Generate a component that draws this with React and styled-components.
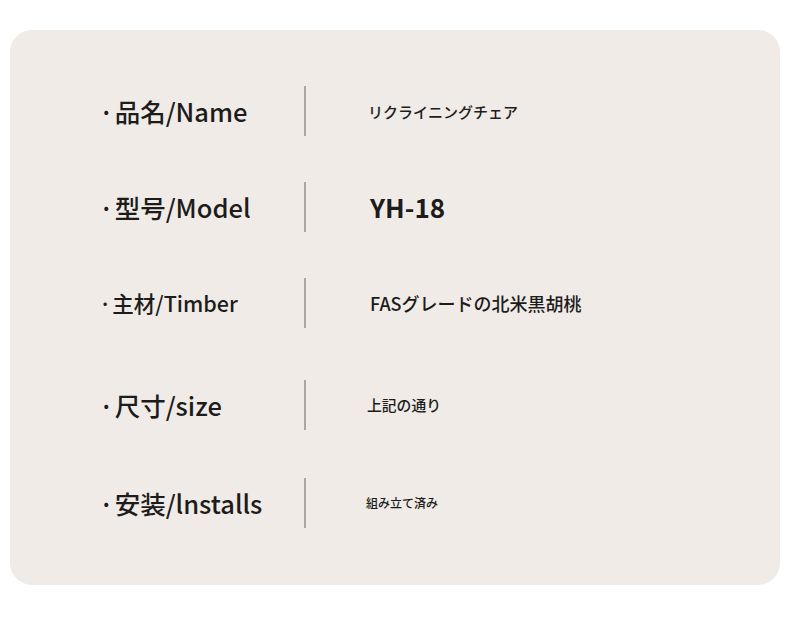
import React from "react";
import styled, { createGlobalStyle } from "styled-components";

const Global = createGlobalStyle`
  html, body { margin: 0; padding: 0; background: #ffffff; }
  body { font-family: "Noto Sans CJK JP", "Noto Sans", sans-serif; color: #1c1c1c; }
`;

const Page = styled.div`
  padding: 30px 10px 37px 10px;
`;

const Card = styled.div`
  width: 770px;
  height: 555px;
  box-sizing: border-box;
  background: #f0ebe6;
  border-radius: 22px;
  padding: 56px 0 0 89px;
  display: flex;
  flex-direction: column;
`;

const Row = styled.div`
  display: grid;
  grid-template-columns: 205px 2px 1fr;
  align-items: center;
  height: 50px;
  margin-top: ${(p) => p.$gap}px;
`;

const Label = styled.div`
  font-size: ${(p) => p.$size}px;
  font-weight: 500;
  white-space: nowrap;
  line-height: 1;
  color: #1c1c1c;
`;

const Dot = styled.span`
  margin-right: 1px;
`;

const Divider = styled.div`
  width: 2px;
  height: 50px;
  background: #a9a6a3;
`;

const Value = styled.div`
  padding-left: ${(p) => p.$indent}px;
  font-size: ${(p) => p.$size}px;
  font-weight: ${(p) => p.$weight};
  white-space: nowrap;
  line-height: 1;
  color: #1c1c1c;
`;

const rows = [
  { gap: 0, label: "品名/Name", lsize: 25.5, value: "リクライニングチェア", vsize: 15, weight: 500, indent: 62 },
  { gap: 46, label: "型号/Model", lsize: 25.5, value: "YH-18", vsize: 26, weight: 600, indent: 64 },
  { gap: 46, label: "主材/Timber", lsize: 21.5, value: "FASグレードの北米黒胡桃", vsize: 18, weight: 500, indent: 64 },
  { gap: 52, label: "尺寸/size", lsize: 25.5, value: "上記の通り", vsize: 14.8, weight: 500, indent: 61 },
  { gap: 48, label: "安装/lnstalls", lsize: 25.5, value: "組み立て済み", vsize: 12, weight: 500, indent: 60 },
];

export default function App() {
  return (
    <>
      <Global />
      <Page>
        <Card>
          {rows.map((r) => (
            <Row key={r.label} $gap={r.gap}>
              <Label $size={r.lsize}>
                <Dot>·</Dot>
                {r.label}
              </Label>
              <Divider />
              <Value $size={r.vsize} $weight={r.weight} $indent={r.indent}>
                {r.value}
              </Value>
            </Row>
          ))}
        </Card>
      </Page>
    </>
  );
}
